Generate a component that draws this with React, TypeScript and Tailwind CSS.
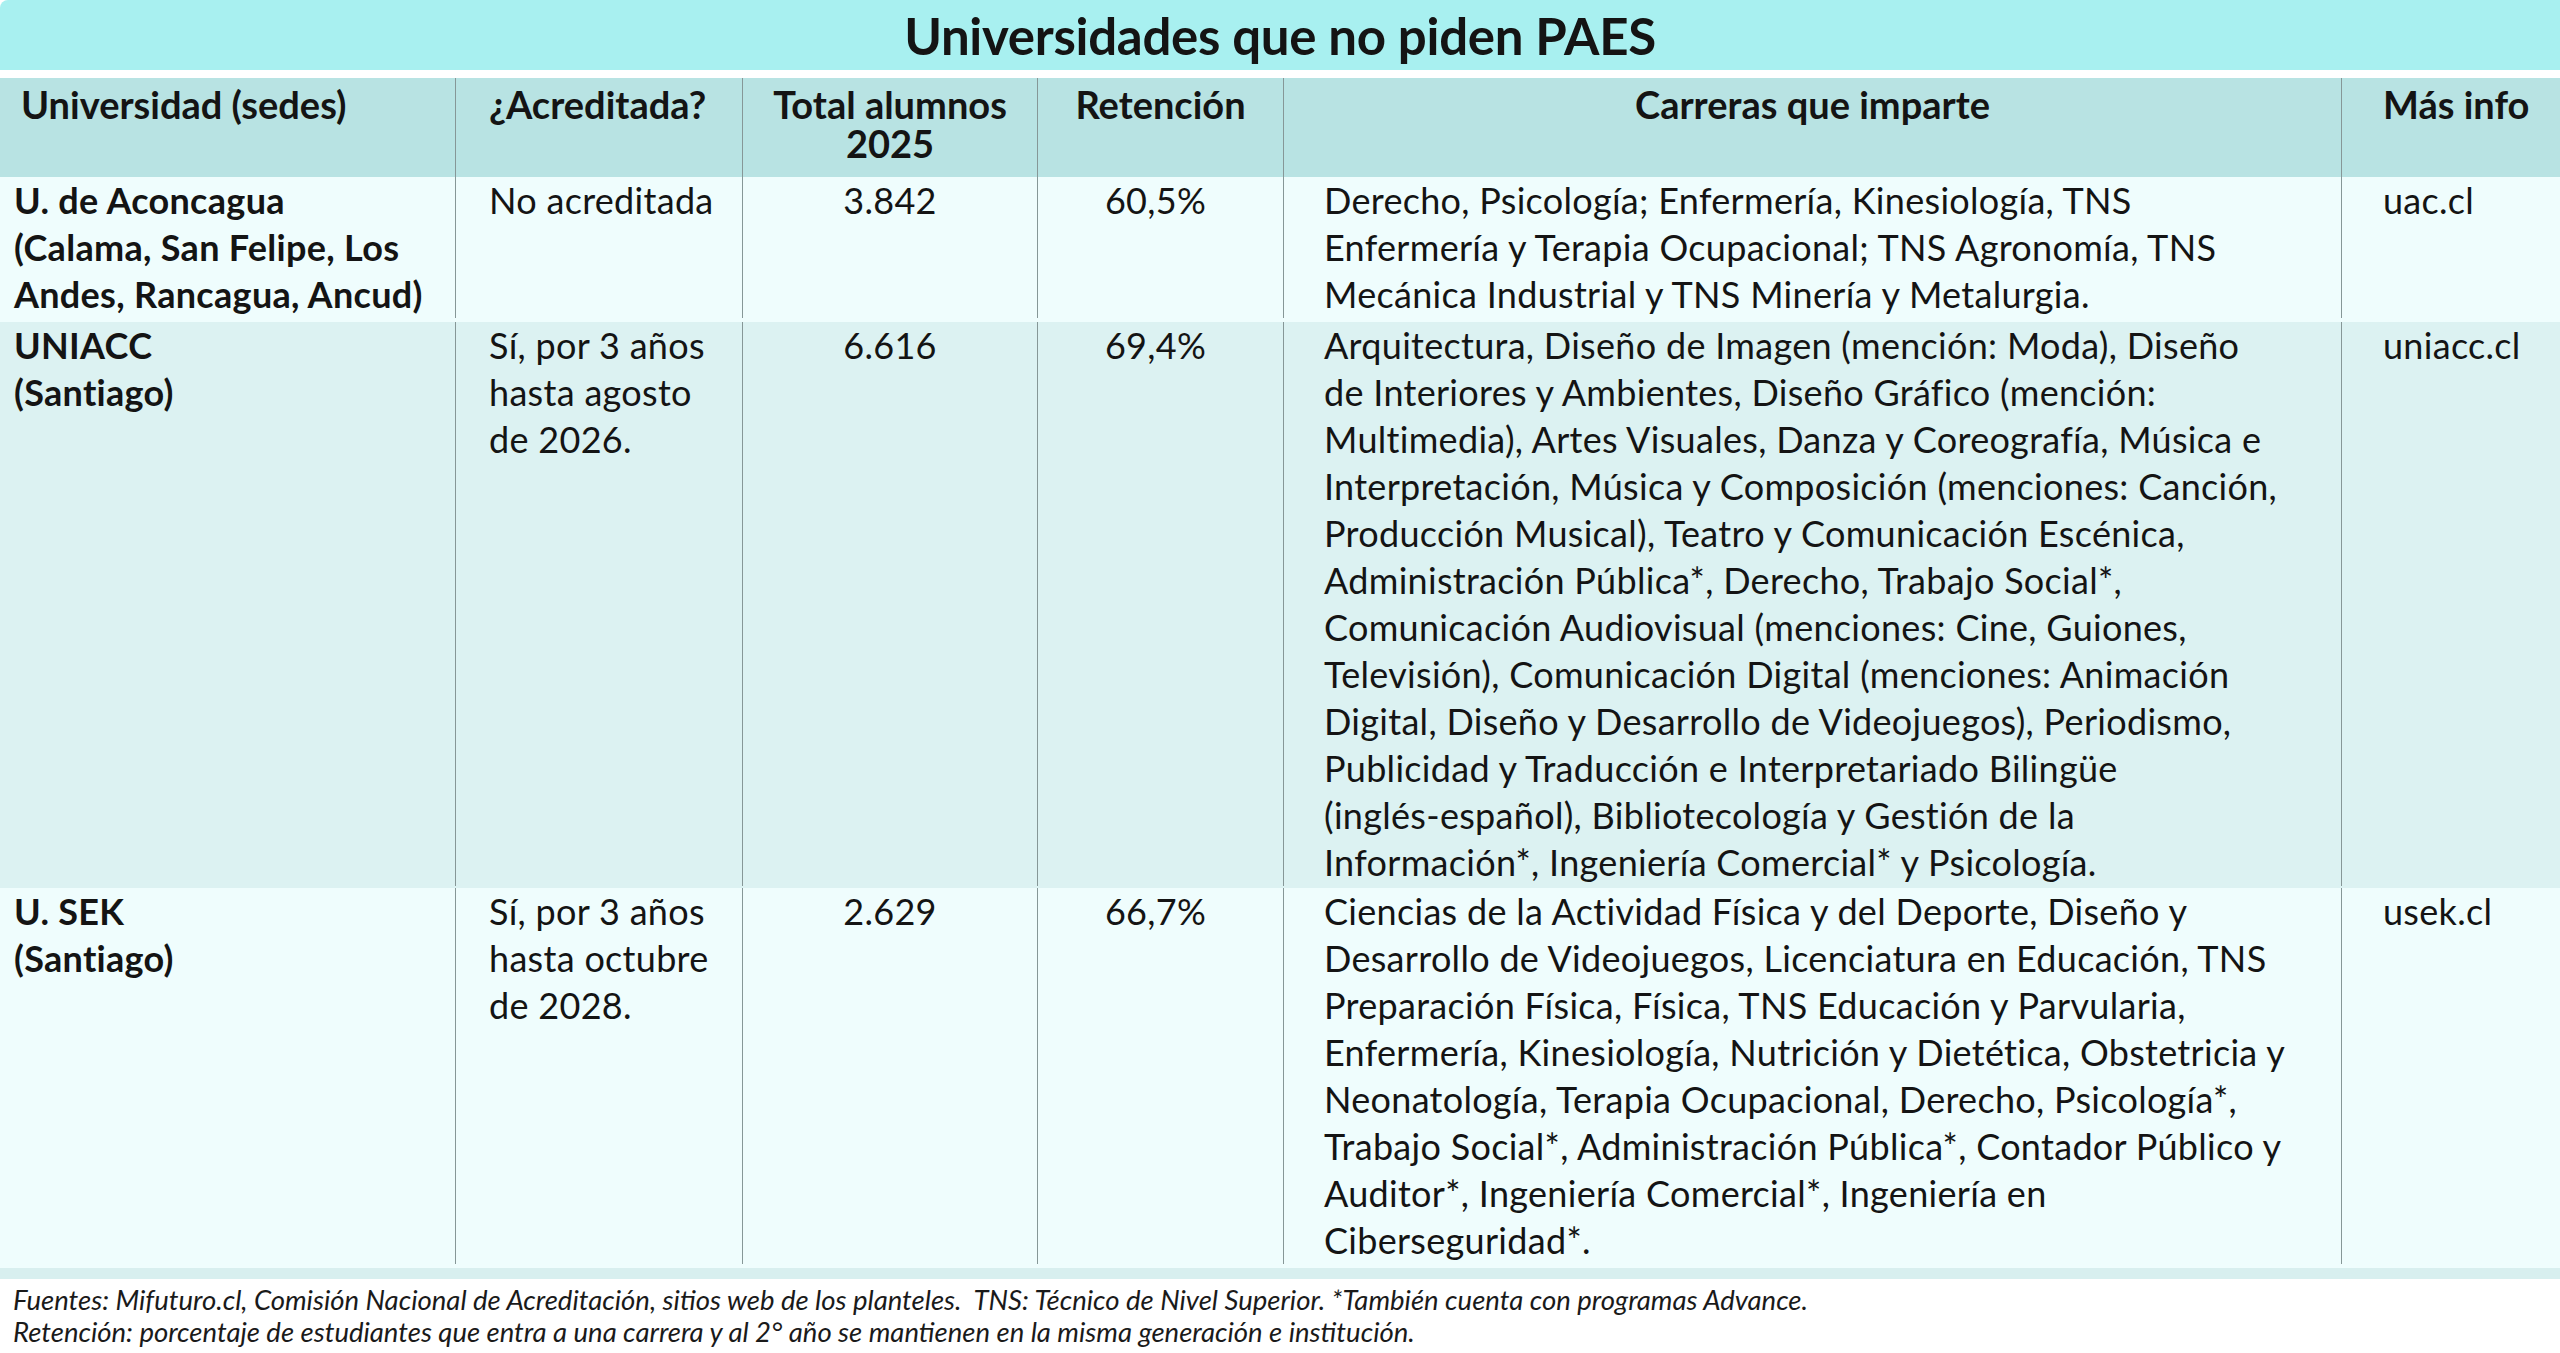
const cols = "grid grid-cols-[455px_287px_295px_246px_1058px_1fr]";
const line = "border-l-[1.5px] border-[#869797]";

type Row = {
  uni: string[];
  acred: string[];
  total: string;
  ret: string;
  carreras: string[];
  web: string;
  bg: string;
  pad: string;
};

const rows: Row[] = [
  {
    uni: ["U. de Aconcagua", "(Calama, San Felipe, Los", "Andes, Rancagua, Ancud)"],
    acred: ["No acreditada"],
    total: "3.842",
    ret: "60,5%",
    carreras: [
      "Derecho, Psicología; Enfermería, Kinesiología, TNS",
      "Enfermería y Terapia Ocupacional; TNS Agronomía, TNS",
      "Mecánica Industrial y TNS Minería y Metalurgia.",
    ],
    web: "uac.cl",
    bg: "bg-[#effdfd]",
    pad: "pb-[4px]",
  },
  {
    uni: ["UNIACC", "(Santiago)"],
    acred: ["Sí, por 3 años", "hasta agosto", "de 2026."],
    total: "6.616",
    ret: "69,4%",
    carreras: [
      "Arquitectura, Diseño de Imagen (mención: Moda), Diseño",
      "de Interiores y Ambientes, Diseño Gráfico (mención:",
      "Multimedia), Artes Visuales, Danza y Coreografía, Música e",
      "Interpretación, Música y Composición (menciones: Canción,",
      "Producción Musical), Teatro y Comunicación Escénica,",
      "Administración Pública*, Derecho, Trabajo Social*,",
      "Comunicación Audiovisual (menciones: Cine, Guiones,",
      "Televisión), Comunicación Digital (menciones: Animación",
      "Digital, Diseño y Desarrollo de Videojuegos), Periodismo,",
      "Publicidad y Traducción e Interpretariado Bilingüe",
      "(inglés-español), Bibliotecología y Gestión de la",
      "Información*, Ingeniería Comercial* y Psicología.",
    ],
    web: "uniacc.cl",
    bg: "bg-[#dcf2f2]",
    pad: "pb-[2px]",
  },
  {
    uni: ["U. SEK", "(Santiago)"],
    acred: ["Sí, por 3 años", "hasta octubre", "de 2028."],
    total: "2.629",
    ret: "66,7%",
    carreras: [
      "Ciencias de la Actividad Física y del Deporte, Diseño y",
      "Desarrollo de Videojuegos, Licenciatura en Educación, TNS",
      "Preparación Física, Física, TNS Educación y Parvularia,",
      "Enfermería, Kinesiología, Nutrición y Dietética, Obstetricia y",
      "Neonatología, Terapia Ocupacional, Derecho, Psicología*,",
      "Trabajo Social*, Administración Pública*, Contador Público y",
      "Auditor*, Ingeniería Comercial*, Ingeniería en",
      "Ciberseguridad*.",
    ],
    web: "usek.cl",
    bg: "bg-[#effdfd]",
    pad: "pb-[4px]",
  },
];

// Render wrapped lines exactly as in the print version
const Lines = ({ items }: { items: string[] }) => (
  <>
    {items.map((t, i) => (
      <div key={i} className="whitespace-nowrap">
        {t}
      </div>
    ))}
  </>
);

const App = () => {
  return (
    <div
      className="w-[2560px] h-[1353px] bg-white text-[#141414] overflow-hidden"
      style={{ fontFamily: "Lato, 'Open Sans', sans-serif" }}
    >
      {/* Title */}
      <div className="h-[70px] bg-[#a8f0f0] rounded-tl-[8px] flex items-center justify-center">
        <h1 className="text-[51px] font-bold leading-none tracking-[-0.3px]">
          Universidades que no piden PAES
        </h1>
      </div>
      <div className="h-[8px]" />

      {/* Header */}
      <div className={`${cols} h-[99px] bg-[#b8e3e3] text-[38px] font-bold leading-[39px]`}>
        <div className="pl-[21px] pt-[7px]">Universidad (sedes)</div>
        <div className={`${line} pl-[33px] pt-[7px]`}>¿Acreditada?</div>
        <div className={`${line} text-center pt-[7px]`}>
          Total alumnos
          <br />
          2025
        </div>
        <div className={`${line} text-center pt-[7px]`}>Retención</div>
        <div className={`${line} text-center pt-[7px]`}>Carreras que imparte</div>
        <div className={`${line} pl-[41px] pt-[7px]`}>Más info</div>
      </div>

      {/* Body */}
      {rows.map((r) => (
        <div
          key={r.web}
          className={`${cols} ${r.bg} ${r.pad} text-[36px] leading-[47px] tracking-[0.3px]`}
        >
          <div className="pl-[14px] font-bold">
            <Lines items={r.uni} />
          </div>
          <div className={`${line} pl-[33px]`}>
            <Lines items={r.acred} />
          </div>
          <div className={`${line} text-center`}>{r.total}</div>
          <div className={`${line} text-center pr-[10px]`}>{r.ret}</div>
          <div className={`${line} pl-[40px]`}>
            <Lines items={r.carreras} />
          </div>
          <div className={`${line} pl-[41px]`}>{r.web}</div>
        </div>
      ))}
      <div className="h-[11px] bg-[#d8efef]" />

      {/* Footnotes */}
      <div className="pl-[13px] pt-[5px] text-[27.5px] italic leading-[32px] text-[#1a1a1a]">
        <div className="whitespace-nowrap">
          Fuentes: Mifuturo.cl, Comisión Nacional de Acreditación, sitios web de los planteles.&nbsp; TNS: Técnico de Nivel Superior. *También cuenta con programas Advance.
        </div>
        <div className="whitespace-nowrap">
          Retención: porcentaje de estudiantes que entra a una carrera y al 2° año se mantienen en la misma generación e institución.
        </div>
      </div>
    </div>
  );
};

export default App;
